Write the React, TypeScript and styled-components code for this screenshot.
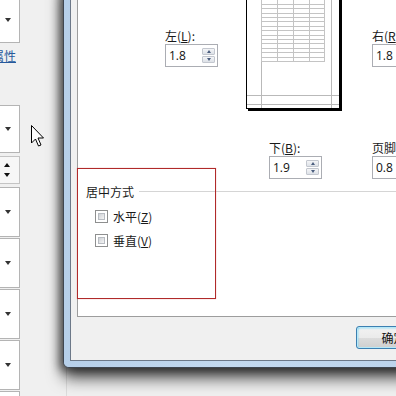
import React from 'react';
import styled, { createGlobalStyle } from 'styled-components';

const GlobalStyle = createGlobalStyle`
  html, body {
    margin: 0;
    padding: 0;
  }
  body {
    background: #f0f0f0;
    font-family: "Noto Sans CJK SC", "Noto Sans", sans-serif;
    font-size: 12px;
    color: #000;
  }
`;

type FieldProps = {
  label: string;
  accessKey: string;
  value: string;
};

const SpinField: React.FC<FieldProps> = ({ label, accessKey, value }) => (
  <S.Field>
    <S.FieldLabel>
      {label}(<u>{accessKey}</u>):
    </S.FieldLabel>
    <S.SpinBox>
      <S.SpinValue>{value}</S.SpinValue>
      <S.SpinButtons>
        <S.SpinButton>
          <S.TriUp />
        </S.SpinButton>
        <S.SpinButton>
          <S.TriDown />
        </S.SpinButton>
      </S.SpinButtons>
    </S.SpinBox>
  </S.Field>
);

const PagePreview: React.FC = () => {
  const rows: number[] = [];
  for (let y = 70; y >= 0; y -= 4.4) rows.push(Math.round(y));
  const cols = [14, 30, 46, 62, 77];
  return (
    <S.Page>
      <svg width="92" height="117" shapeRendering="crispEdges">
        <line x1="14.5" y1="0" x2="14.5" y2="117" stroke="#b9b9b9" />
        <line x1="84.5" y1="0" x2="84.5" y2="117" stroke="#b9b9b9" />
        <line x1="0" y1="104.5" x2="92" y2="104.5" stroke="#b9b9b9" />
        <line x1="0" y1="113.5" x2="92" y2="113.5" stroke="#b9b9b9" />
        {rows.map((y) => (
          <line key={y} x1="14" y1={y + 0.5} x2="78" y2={y + 0.5} stroke="#c4c4c4" />
        ))}
        {cols.map((x) => (
          <line key={x} x1={x + 0.5} y1="0" x2={x + 0.5} y2="71" stroke="#c4c4c4" />
        ))}
      </svg>
    </S.Page>
  );
};

const Cursor: React.FC = () => (
  <S.CursorLayer>
    <svg width="14" height="24" viewBox="0 0 14 24">
      <path
        d="M0.5 0.5 L0.5 18 L4.5 14 L7.5 21 L10 20 L7 13 L12.5 13 Z"
        fill="#fff"
        stroke="#000"
        strokeWidth="1"
      />
    </svg>
  </S.CursorLayer>
);

const App: React.FC = () => (
  <>
    <GlobalStyle />
    <S.Desktop>
      <S.SidePanel>
        <S.SelectBox $height={46} $top={-3}>
          <S.DropArrow />
        </S.SelectBox>
        <S.SideLink>属性</S.SideLink>
        <S.SelectBox $height={48} $top={42}>
          <S.DropArrow />
        </S.SelectBox>
        <S.SpinStub>
          <S.StubUp />
          <S.StubDown />
        </S.SpinStub>
        <S.SelectBox $height={50} $top={3}>
          <S.DropArrow />
        </S.SelectBox>
        <S.SelectBox $height={50} $top={1}>
          <S.DropArrow />
        </S.SelectBox>
        <S.SelectBox $height={50} $top={1}>
          <S.DropArrow />
        </S.SelectBox>
        <S.SelectBox $height={50} $top={1}>
          <S.DropArrow />
        </S.SelectBox>
        <S.SelectBox $height={50} $top={1}>
          <S.DropArrow />
        </S.SelectBox>
      </S.SidePanel>

      <Cursor />

      <S.Dialog>
        <S.Frame>
          <S.Body>
            <S.TabPanel>
              <S.MiddleRow>
                <S.SideField>
                  <SpinField label="左" accessKey="L" value="1.8" />
                </S.SideField>
                <S.PreviewWrap>
                  <PagePreview />
                </S.PreviewWrap>
                <S.SideField $gap={32}>
                  <SpinField label="右" accessKey="R" value="1.8" />
                </S.SideField>
              </S.MiddleRow>
              <S.BottomRow>
                <SpinField label="下" accessKey="B" value="1.9" />
                <SpinField label="页脚" accessKey="F" value="0.8" />
              </S.BottomRow>
              <S.Group>
                <S.GroupHeader>
                  <span>居中方式</span>
                  <S.GroupRule />
                </S.GroupHeader>
                <S.CheckList>
                  <S.CheckRow>
                    <S.CheckBox />
                    <span>
                      水平(<u>Z</u>)
                    </span>
                  </S.CheckRow>
                  <S.CheckRow>
                    <S.CheckBox />
                    <span>
                      垂直(<u>V</u>)
                    </span>
                  </S.CheckRow>
                </S.CheckList>
              </S.Group>
            </S.TabPanel>
            <S.Footer>
              <S.OkButton>确定</S.OkButton>
            </S.Footer>
          </S.Body>
        </S.Frame>
      </S.Dialog>

      <S.Highlight />
    </S.Desktop>
  </>
);

const S = {
  Desktop: styled.div`
    position: relative;
    width: 396px;
    height: 396px;
    overflow: hidden;
    background: #f0f0f0;
    display: flex;
  `,
  SidePanel: styled.div`
    width: 66px;
    height: 100%;
    border-right: 1px solid #dcdcdc;
    display: flex;
    flex-direction: column;
    flex-shrink: 0;
  `,
  SelectBox: styled.div<{ $height: number; $top: number }>`
    box-sizing: border-box;
    flex-shrink: 0;
    width: 23px;
    margin-left: -3px;
    margin-top: ${(p) => p.$top}px;
    height: ${(p) => p.$height}px;
    background: #fff;
    border: 1px solid #b4b4b4;
    display: flex;
    align-items: center;
    padding-left: 7px;
  `,
  DropArrow: styled.div`
    width: 0;
    height: 0;
    border-left: 3.5px solid transparent;
    border-right: 3.5px solid transparent;
    border-top: 4px solid #333;
  `,
  SideLink: styled.div`
    margin-top: 6px;
    margin-left: -8px;
    height: 14px;
    line-height: 14px;
    font-size: 12px;
    color: #26599c;
    text-decoration: underline;
    white-space: nowrap;
  `,
  SpinStub: styled.div`
    box-sizing: border-box;
    flex-shrink: 0;
    margin-top: 3px;
    margin-left: -3px;
    width: 23px;
    height: 28px;
    background: #f7f7f7;
    border: 1px solid #c4c4c4;
    display: flex;
    flex-direction: column;
    align-items: flex-start;
    padding: 6px 0 0 6px;
    gap: 6px;
  `,
  StubUp: styled.div`
    width: 0;
    height: 0;
    border-left: 3.5px solid transparent;
    border-right: 3.5px solid transparent;
    border-bottom: 4px solid #111;
  `,
  StubDown: styled.div`
    width: 0;
    height: 0;
    border-left: 3.5px solid transparent;
    border-right: 3.5px solid transparent;
    border-top: 4px solid #111;
  `,
  CursorLayer: styled.div`
    position: absolute;
    left: 31px;
    top: 125px;
    width: 14px;
    height: 24px;
    z-index: 3;
  `,
  Dialog: styled.div`
    position: absolute;
    left: 63px;
    top: -20px;
    width: 420px;
    height: 388px;
    box-sizing: border-box;
    border: 1px solid #3f4650;
    border-radius: 6px;
    background: #bcd4ec;
    box-shadow: 0 10px 16px rgba(0, 0, 0, 0.7), -4px 3px 9px rgba(0, 0, 0, 0.45);
    z-index: 2;
  `,
  Frame: styled.div`
    box-sizing: border-box;
    height: 100%;
    padding: 6px;
    border-radius: 5px;
    background: linear-gradient(90deg, #b6cfe9, #c3d9ef 40%, #b9d1ea);
  `,
  Body: styled.div`
    box-sizing: border-box;
    height: 100%;
    border: 1px solid #6c7888;
    background: #f0f0f0;
    display: flex;
    flex-direction: column;
  `,
  TabPanel: styled.div`
    box-sizing: border-box;
    height: 329px;
    margin-left: 6px;
    background: #fff;
    border-left: 1px solid #9d9d9d;
    border-bottom: 1px solid #9d9d9d;
    display: flex;
    flex-direction: column;
  `,
  MiddleRow: styled.div`
    display: flex;
    align-items: flex-start;
    margin-top: 2px;
    padding-left: 87px;
  `,
  SideField: styled.div<{ $gap?: number }>`
    margin-top: 38px;
    margin-left: ${(p) => p.$gap ?? 0}px;
  `,
  PreviewWrap: styled.div`
    margin-left: 28px;
  `,
  Page: styled.div`
    box-sizing: border-box;
    width: 94px;
    height: 119px;
    border: 1px solid #000;
    background: #fff;
    box-shadow: 2px 2px 0 #000;
    svg {
      display: block;
    }
  `,
  BottomRow: styled.div`
    display: flex;
    gap: 50px;
    margin-top: 31px;
    padding-left: 191px;
  `,
  Field: styled.div`
    display: flex;
    flex-direction: column;
    width: 53px;
    white-space: nowrap;
  `,
  FieldLabel: styled.div`
    height: 16px;
    line-height: 16px;
    font-size: 12px;
    color: #1a1a1a;
  `,
  SpinBox: styled.div`
    box-sizing: border-box;
    width: 53px;
    height: 23px;
    border: 1px solid #abadb3;
    background: #fff;
    display: flex;
    align-items: center;
    justify-content: space-between;
    padding: 0 2px 0 3px;
  `,
  SpinValue: styled.span`
    font-family: "Open Sans", "Noto Sans", sans-serif;
    font-size: 12px;
    color: #111;
  `,
  SpinButtons: styled.div`
    display: flex;
    flex-direction: column;
    width: 13px;
    height: 15px;
    gap: 1px;
  `,
  SpinButton: styled.div`
    box-sizing: border-box;
    flex: 1;
    border: 1px solid #c3c7cf;
    border-radius: 1px;
    background: linear-gradient(#f4f5f7, #dde1e7);
    display: flex;
    align-items: center;
    justify-content: center;
  `,
  TriUp: styled.div`
    width: 0;
    height: 0;
    border-left: 2.5px solid transparent;
    border-right: 2.5px solid transparent;
    border-bottom: 3px solid #4a5d7e;
  `,
  TriDown: styled.div`
    width: 0;
    height: 0;
    border-left: 2.5px solid transparent;
    border-right: 2.5px solid transparent;
    border-top: 3px solid #4a5d7e;
  `,
  Group: styled.div`
    margin-top: 4px;
    display: flex;
    flex-direction: column;
  `,
  GroupHeader: styled.div`
    display: flex;
    align-items: center;
    height: 16px;
    padding-left: 8px;
    font-size: 12px;
    color: #1a1a1a;
  `,
  GroupRule: styled.div`
    flex: 1;
    height: 1px;
    margin-left: 5px;
    background: #d5d5d5;
  `,
  CheckList: styled.div`
    display: flex;
    flex-direction: column;
    gap: 10px;
    margin-top: 10px;
    padding-left: 17px;
  `,
  CheckRow: styled.div`
    display: flex;
    align-items: center;
    gap: 5px;
    height: 14px;
    font-size: 12px;
    color: #1a1a1a;
  `,
  CheckBox: styled.div`
    box-sizing: border-box;
    width: 13px;
    height: 13px;
    border: 1px solid #8e8f8f;
    background: #fff;
    padding: 2px;
    &::after {
      content: '';
      display: block;
      width: 100%;
      height: 100%;
      box-sizing: border-box;
      border: 1px solid #b8bcc2;
      background: linear-gradient(135deg, #cfd2d6, #f4f4f4);
    }
  `,
  Footer: styled.div`
    flex: 1;
    display: flex;
    align-items: flex-start;
    padding: 9px 0 0 285px;
  `,
  OkButton: styled.div`
    box-sizing: border-box;
    width: 75px;
    height: 23px;
    border: 1px solid #3c7fb1;
    border-radius: 3px;
    background: linear-gradient(#f2f2f2, #ebebeb 50%, #dddddd 50%, #cfcfcf);
    box-shadow: inset 0 0 0 1px #b5e8f8, inset 1px 1px 2px #63d0f5;
    display: flex;
    align-items: center;
    justify-content: center;
    font-size: 12px;
    color: #111;
  `,
  Highlight: styled.div`
    position: absolute;
    left: 77px;
    top: 168px;
    width: 139px;
    height: 131px;
    box-sizing: border-box;
    border: 1px solid #b02a2a;
    box-shadow: 0 0 1px rgba(220, 90, 90, 0.6);
    z-index: 4;
    pointer-events: none;
  `,
};

export default App;
